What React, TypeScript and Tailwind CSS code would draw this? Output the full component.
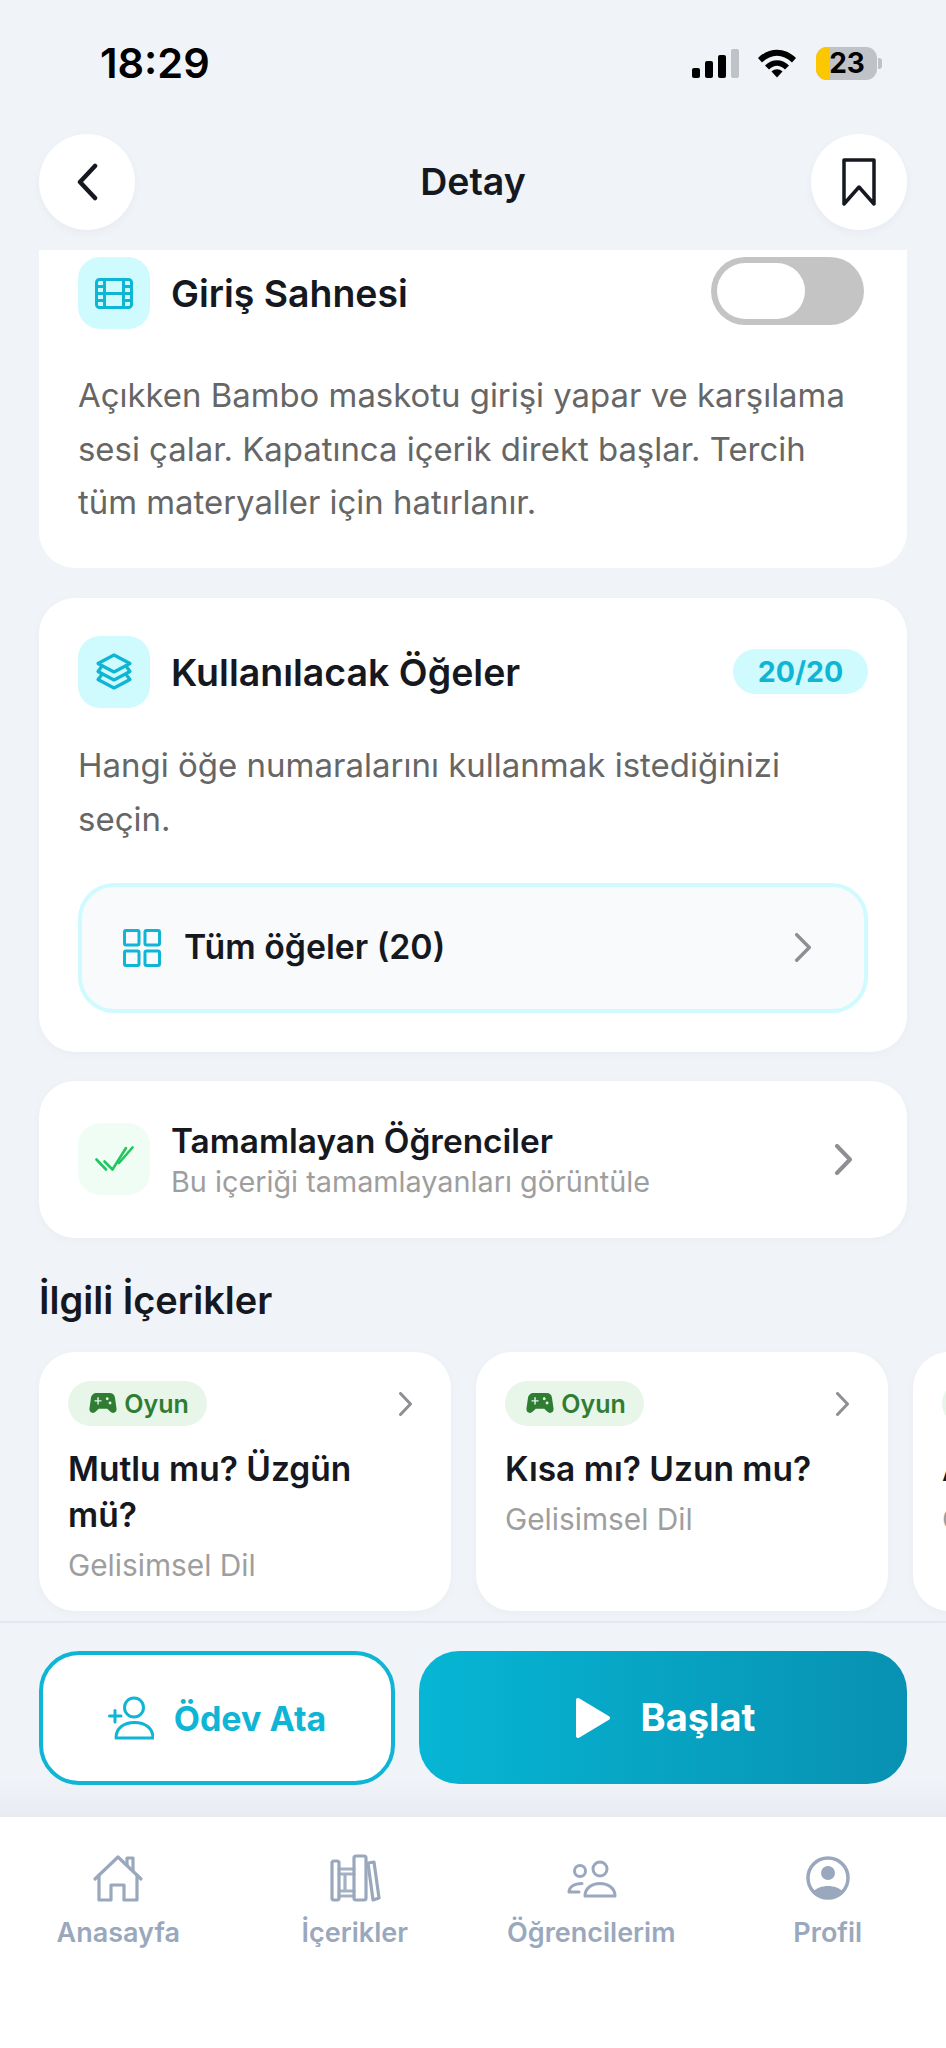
import React from 'react';
import { MdSportsEsports } from 'react-icons/md';

const related = [
  { title: 'Mutlu mu? Üzgün mü?' },
  { title: 'Kısa mı? Uzun mu?' },
  { title: 'Açık mı? Kapalı mı?' },
];

const Chevron = ({ w, h, stroke, className }: { w: number; h: number; stroke: number; className?: string }) => (
  <svg className={className} width={w} height={h} viewBox={`0 0 ${w} ${h}`} fill="none" stroke="#8e8e93" strokeWidth={stroke} strokeLinecap="round" strokeLinejoin="round">
    <path d={`M${stroke / 2 + 1} ${stroke / 2} L${w - stroke / 2 - 1} ${h / 2} L${stroke / 2 + 1} ${h - stroke / 2}`} />
  </svg>
);

const StatusIcons = () => (
  <div className="flex items-center pr-[64px]">
    <div className="flex items-end gap-[5px] h-[29px]">
      <span className="w-[8px] h-[10px] rounded-[2px] bg-black" />
      <span className="w-[8px] h-[17px] rounded-[2px] bg-black" />
      <span className="w-[8px] h-[23px] rounded-[2px] bg-black" />
      <span className="w-[8px] h-[29px] rounded-[2px] bg-[#bfc3c8]" />
    </div>
    <svg className="ml-[18px]" width="40" height="30" viewBox="0 0 40 30">
      <path d="M1 10 C12 -1 28 -1 39 10 L35 14.5 C25.5 5.5 14.5 5.5 5 14.5 Z" fill="#000" />
      <path d="M8 17.5 C15 10.5 25 10.5 32 17.5 L28 21.5 C22.5 16.5 17.5 16.5 12 21.5 Z" fill="#000" />
      <path d="M14.5 23.5 C18 20.5 22 20.5 25.5 23.5 L20 29.5 Z" fill="#000" />
    </svg>
    <div className="ml-[19px] relative w-[61px] h-[33px] rounded-[11px] bg-[#bfc3c8] overflow-hidden flex items-center justify-center">
      <span className="absolute left-0 top-0 bottom-0 w-[14px] bg-[#fdc700]" />
      <span className="relative text-[28px] font-bold text-black leading-none pl-[1px]">23</span>
    </div>
    <span className="ml-[1px] w-[4px] h-[11px] rounded-r-[3px] bg-[#bfc3c8]" />
  </div>
);

const IconBox = ({ children, green }: { children: React.ReactNode; green?: boolean }) => (
  <div className={`w-[72px] h-[72px] shrink-0 rounded-[22px] flex items-center justify-center ${green ? 'bg-[#f0fdf4]' : 'bg-[#cffafe]'}`}>
    {children}
  </div>
);

const RelatedCard = ({ title }: { title: string }) => (
  <div className="w-[412px] h-[259px] shrink-0 rounded-[36px] bg-white shadow-[0_2px_10px_rgba(15,23,42,0.03)] pt-[29px] px-[29px]">
    <div className="flex items-center justify-between">
      <div className="h-[45px] w-[139px] rounded-full bg-[#e8f5e9] flex items-center justify-center gap-[4px] text-[#2e7d32] text-[25px] font-semibold">
        <MdSportsEsports size={34} />
        <span className="pt-[3px]">Oyun</span>
      </div>
      <Chevron w={15} h={24} stroke={3} className="mr-[9px] mt-[2px]" />
    </div>
    <div className="mt-[20px] text-[33.500px] leading-[46px] font-semibold text-[#15181e]">{title}</div>
    <div className="mt-[9px] text-[29.800px] leading-[36px] text-[#9e9e9e]">Gelisimsel Dil</div>
  </div>
);

const tabs = [
  {
    label: 'Anasayfa',
    icon: (
      <svg width="52" height="48" viewBox="0 0 52 48" fill="none" stroke="#9aa8bd" strokeWidth="3.2" strokeLinecap="round" strokeLinejoin="round">
        <path d="M3 25 L26 3 L49 25" />
        <path d="M7 21 V46 H19 V31 H32 V46 H45 V21" />
        <path d="M35 11 V4 H41 V17" />
      </svg>
    ),
  },
  {
    label: 'İçerikler',
    icon: (
      <svg width="52" height="48" viewBox="0 0 52 48" fill="none" stroke="#9aa8bd" strokeWidth="3.2" strokeLinecap="round" strokeLinejoin="round">
        <rect x="3" y="7" width="7" height="39" rx="2" />
        <path d="M10 15 H25 M10 20 H25 M10 37 H25 M10 42 H25 M16 20 V37" className="opacity-90" />
        <rect x="25" y="2" width="12" height="44" rx="2" />
        <path d="M39 9 L45 8 L50 44 L44 46 Z" />
      </svg>
    ),
  },
  {
    label: 'Öğrencilerim',
    icon: (
      <svg width="52" height="48" viewBox="0 0 52 48" fill="none" stroke="#9aa8bd" strokeWidth="3" strokeLinecap="round" strokeLinejoin="round">
        <circle cx="15" cy="17" r="5.500" />
        <circle cx="35" cy="15" r="7" />
        <path d="M20 42 C20 34 27 29.500 35 29.500 C43 29.500 50 34 50 42 Z" />
        <path d="M17 29.500 C9 29.500 4 33 4 38 H14" />
      </svg>
    ),
  },
  {
    label: 'Profil',
    icon: (
      <svg width="46" height="46" viewBox="0 0 46 46">
        <circle cx="23" cy="23" r="20" fill="none" stroke="#9aa8bd" strokeWidth="3.500" />
        <circle cx="23" cy="18" r="7" fill="#9aa8bd" />
        <path d="M8 37 C11 33 17 31 23 31 C29 31 35 33 38 37 C34 41.500 29 43.500 23 43.500 C17 43.500 12 41.500 8 37 Z" fill="#9aa8bd" />
      </svg>
    ),
  },
];

export default function App() {
  return (
    <div className="w-[946px] h-[2048px] overflow-hidden flex flex-col bg-[#f0f4f9] font-['Inter',sans-serif]">
      {/* Status bar */}
      <div className="h-[126px] shrink-0 flex items-center justify-between">
        <span className="pl-[100px] pt-[1px] text-[41.500px] font-semibold text-black">18:29</span>
        <StatusIcons />
      </div>

      {/* Header */}
      <div className="mt-[8px] mb-[20px] h-[96px] shrink-0 px-[39px] flex items-center justify-between">
        <div className="w-[96px] h-[96px] rounded-full bg-white shadow-[0_3px_10px_rgba(15,23,42,0.04)] flex items-center justify-center">
          <svg width="24" height="38" viewBox="0 0 24 38" fill="none" stroke="#15181e" strokeWidth="4.500" strokeLinecap="round" strokeLinejoin="round">
            <path d="M20 3 L5 19 L20 35" />
          </svg>
        </div>
        <span className="pt-[1px] text-[37.500px] font-semibold text-[#15181e]">Detay</span>
        <div className="w-[96px] h-[96px] rounded-full bg-white shadow-[0_3px_10px_rgba(15,23,42,0.04)] flex items-center justify-center">
          <svg width="36" height="48" viewBox="0 0 36 48" fill="none" stroke="#15181e" strokeWidth="3.500" strokeLinejoin="round">
            <path d="M3 2 H33 V46 L18 29 L3 46 Z" />
          </svg>
        </div>
      </div>

      {/* Scrolled content */}
      <div className="flex-1 overflow-hidden">
        <div className="-mt-[32px] px-[39px] flex flex-col">
          <div className="rounded-[36px] bg-white pt-[39px] px-[39px] pb-[38px]">
            <div className="flex items-center justify-between">
              <div className="flex items-center gap-[21px]">
                <IconBox>
                  <svg width="38" height="31" viewBox="0 0 38 31" fill="none" stroke="#0eb5d4" strokeWidth="3">
                    <rect x="1.500" y="1.500" width="35" height="28" rx="3" />
                    <path d="M9.500 1.500 V29.500 M28.500 1.500 V29.500 M9.500 15.500 H28.500 M1.500 8.500 H9.500 M1.500 15.500 H9.500 M1.500 22.500 H9.500 M28.500 8.500 H36.500 M28.500 15.500 H36.500 M28.500 22.500 H36.500" />
                  </svg>
                </IconBox>
                <span className="pt-[2px] text-[37.400px] font-semibold text-[#15181e]">Giriş Sahnesi</span>
              </div>
              <div className="mb-[4px] mr-[4px] w-[153px] h-[68px] rounded-full bg-[#c4c4c4] p-[6px]">
                <div className="w-[88px] h-[56px] rounded-full bg-white" />
              </div>
            </div>
            <p className="mt-[40px] text-[32.900px] leading-[53.500px] text-[#666666]">
              Açıkken Bambo maskotu girişi yapar ve karşılama sesi çalar. Kapatınca içerik direkt başlar. Tercih tüm materyaller için hatırlanır.
            </p>
          </div>

          <div className="mt-[30px] rounded-[36px] bg-white shadow-[0_2px_10px_rgba(15,23,42,0.03)] pt-[38px] px-[39px] pb-[39px]">
            <div className="flex items-center justify-between">
              <div className="flex items-center gap-[21px]">
                <IconBox>
                  <svg width="38" height="37" viewBox="0 0 38 37" fill="none" stroke="#0eb5d4" strokeWidth="3.200" strokeLinecap="round" strokeLinejoin="round">
                    <path d="M19 2 L35 10.500 L19 19 L3 10.500 Z" />
                    <path d="M7 13 L3 18.500 L19 27 L35 18.500 L31 13" />
                    <path d="M7 21.500 L3 26.500 L19 35 L35 26.500 L31 21.500" />
                  </svg>
                </IconBox>
                <span className="pt-[3px] text-[37.500px] font-semibold text-[#15181e]">Kullanılacak Öğeler</span>
              </div>
              <div className="w-[135px] h-[45px] rounded-full bg-[#cffafe] flex items-center justify-center pt-[2px] text-[28.500px] font-bold text-[#0eb5d4]">
                20/20
              </div>
            </div>
            <p className="mt-[30px] text-[33px] leading-[54px] text-[#666666]">
              Hangi öğe numaralarını kullanmak istediğinizi seçin.
            </p>
            <div className="mt-[37px] h-[130px] rounded-[36px] border-[4px] border-[#cffafe] bg-[#f8fafc] pl-[41px] pr-[52px] flex items-center justify-between">
              <div className="flex items-center gap-[23px]">
                <svg width="38" height="38" viewBox="0 0 38 38" fill="none" stroke="#0eb5d4" strokeWidth="3">
                  <rect x="1.500" y="1.500" width="14.500" height="14.500" rx="1.500" />
                  <rect x="22" y="1.500" width="14.500" height="14.500" rx="1.500" />
                  <rect x="1.500" y="22" width="14.500" height="14.500" rx="1.500" />
                  <rect x="22" y="22" width="14.500" height="14.500" rx="1.500" />
                </svg>
                <span className="text-[33.800px] font-semibold text-[#15181e]">Tüm öğeler (20)</span>
              </div>
              <Chevron w={18} h={29} stroke={3.400} />
            </div>
          </div>

          <div className="mt-[29px] h-[157px] rounded-[36px] bg-white shadow-[0_2px_10px_rgba(15,23,42,0.03)] pl-[39px] pr-[54px] flex items-center justify-between">
            <div className="flex items-center gap-[21px]">
              <IconBox green>
                <svg width="39" height="26" viewBox="0 0 39 26" fill="none" stroke="#22c55e" strokeWidth="2.600" strokeLinecap="round" strokeLinejoin="round">
                  <path d="M1.500 13.500 L11 23.500" />
                  <path d="M9.500 15.500 L17.500 23.500 L31 2" />
                  <path d="M24 17 L37.500 1.500" />
                </svg>
              </IconBox>
              <div className="pt-[3px]">
                <div className="text-[33.400px] leading-[42px] font-semibold text-[#15181e]">Tamamlayan Öğrenciler</div>
                <div className="text-[28.800px] leading-[40px] text-[#9e9e9e]">Bu içeriği tamamlayanları görüntüle</div>
              </div>
            </div>
            <Chevron w={19} h={31} stroke={4} />
          </div>

          <h2 className="mt-[39px] text-[38px] leading-[46px] font-semibold text-[#15181e]">İlgili İçerikler</h2>

          <div className="mt-[29px] flex gap-[25px] w-[1400px]">
            {related.map(r => (
              <RelatedCard key={r.title} title={r.title} />
            ))}
          </div>
        </div>
      </div>

      {/* Action buttons */}
      <div className="h-[196px] shrink-0 border-t-2 border-[#e4e8ee] bg-gradient-to-b from-[#f0f4f9] from-80% to-[#e8ecf2] pt-[28px] px-[39px] flex gap-[24px]">
        <div className="w-[356px] h-[134px] rounded-[40px] border-[4px] border-[#0eb5d4] bg-white flex items-center justify-center gap-[20px]">
          <svg width="46" height="46" viewBox="0 0 46 46" fill="none" stroke="#0eb5d4" strokeWidth="3" strokeLinecap="round" strokeLinejoin="round">
            <circle cx="26" cy="12.500" r="9.500" />
            <path d="M8 43 C8 33 16 27.500 26.500 27.500 C37 27.500 45 33 45 43 Z" />
            <path d="M1.500 21 H13 M7 15.500 V27" />
          </svg>
          <span className="text-[34px] font-bold text-[#0eb5d4]">Ödev Ata</span>
        </div>
        <div className="w-[488px] h-[133px] rounded-[40px] bg-gradient-to-r from-[#06b6d4] to-[#0891b2] pl-[4px] flex items-center justify-center gap-[30px]">
          <svg width="36" height="42" viewBox="0 0 36 42" fill="#fff" stroke="#fff" strokeWidth="4" strokeLinejoin="round">
            <path d="M3 3 L33 21 L3 39 Z" />
          </svg>
          <span className="text-[38px] font-bold text-white">Başlat</span>
        </div>
      </div>

      {/* Tab bar */}
      <div className="h-[231px] shrink-0 bg-white grid grid-cols-4 pt-[37px]">
        {tabs.map(t => (
          <div key={t.label} className="flex flex-col items-center">
            <div className="h-[48px] flex items-center justify-center">{t.icon}</div>
            <span className="mt-[13px] text-[27px] leading-[36px] font-semibold text-[#9aa8bd]">{t.label}</span>
          </div>
        ))}
      </div>
    </div>
  );
}
